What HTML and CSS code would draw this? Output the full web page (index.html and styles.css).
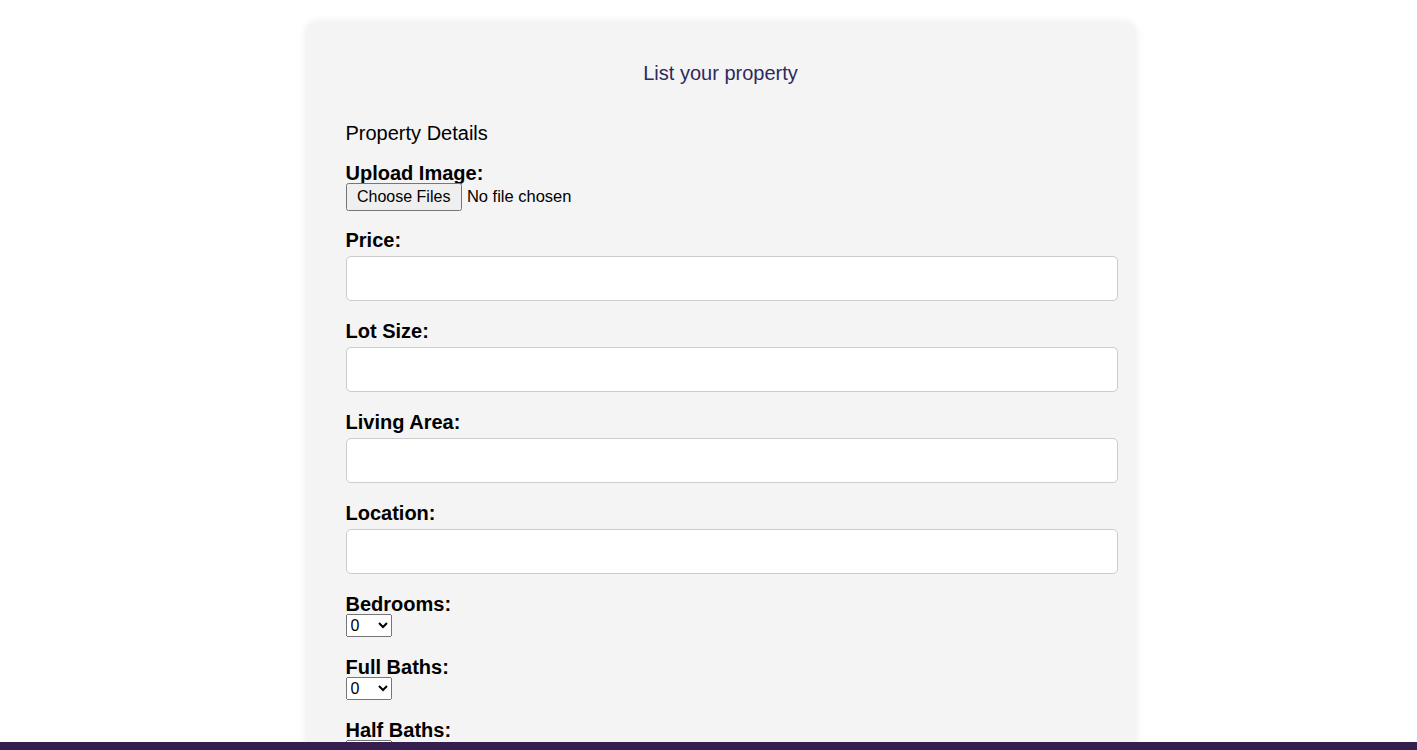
FILE: index.html
```html
<!DOCTYPE html>
<html lang="en">
<head>
<meta charset="utf-8">
<title>List your property</title>
<link rel="stylesheet" href="styles.css">
</head>
<body>
<div class="page">
  <div class="card">
    <h2 class="title">List your property</h2>
    <form class="form">
      <h3 class="section">Property Details</h3>
      <div class="group">
        <label class="label">Upload Image:</label>
        <input class="file" type="file" multiple>
      </div>
      <div class="group">
        <label class="label">Price:</label>
        <input class="text" type="text">
      </div>
      <div class="group">
        <label class="label">Lot Size:</label>
        <input class="text" type="text">
      </div>
      <div class="group">
        <label class="label">Living Area:</label>
        <input class="text" type="text">
      </div>
      <div class="group">
        <label class="label">Location:</label>
        <input class="text" type="text">
      </div>
      <div class="group">
        <label class="label">Bedrooms:</label>
        <select class="select"><option>0</option><option>1</option><option>2</option><option>3</option></select>
      </div>
      <div class="group">
        <label class="label">Full Baths:</label>
        <select class="select"><option>0</option><option>1</option><option>2</option><option>3</option></select>
      </div>
      <div class="group">
        <label class="label">Half Baths:</label>
        <select class="select"><option>0</option><option>1</option><option>2</option><option>3</option></select>
      </div>
    </form>
  </div>
</div>
<footer class="footer"></footer>
</body>
</html>
```
FILE: styles.css
```css
html, body {
  margin: 0;
  padding: 0;
  background: #ffffff;
  font-family: "Liberation Sans", Arial, sans-serif;
  color: #000;
}
.page {
  display: flex;
  justify-content: center;
  padding: 22px 0 40px 24px;
}
.card {
  width: 750px;
  padding: 40px 40px 40px 40px;
  background: #f4f4f4;
  border-radius: 10px;
  box-shadow: 0 0 10px rgba(0, 0, 0, 0.08);
}
.title {
  margin: 0;
  font-size: 20px;
  font-weight: normal;
  line-height: 22px;
  text-align: center;
  color: #2d2a5c;
}
.form {
  margin-top: 38px;
}
.section {
  margin: 0 0 18px 0;
  font-size: 20px;
  font-weight: normal;
  line-height: 22px;
}
.group {
  margin-bottom: 19px;
}
.label {
  display: block;
  font-size: 20px;
  font-weight: bold;
  line-height: 22px;
}
.file {
  display: block;
  margin-top: -1px;
  margin-bottom: -1px;
  font-size: 16.5px;
  font-family: "Liberation Sans", Arial, sans-serif;
}
.file::file-selector-button {
  font-size: 16px;
  font-family: "Liberation Sans", Arial, sans-serif;
  padding: 3px 9.5px;
  margin-right: 5px;
}
.text {
  display: block;
  margin-top: 5px;
  width: 750px;
  height: 23px;
  padding: 10px;
  font-size: 20px;
  border: 1px solid #cccccc;
  border-radius: 5px;
  background: #ffffff;
  box-sizing: content-box;
}
.select {
  display: block;
  margin-top: -1px;
  width: 46px;
  height: 23px;
  font-size: 16px;
  font-family: "Liberation Sans", Arial, sans-serif;
}
.footer {
  position: fixed;
  left: 0;
  right: 0;
  bottom: 0;
  height: 8px;
  background: #341f4f;
}
```
